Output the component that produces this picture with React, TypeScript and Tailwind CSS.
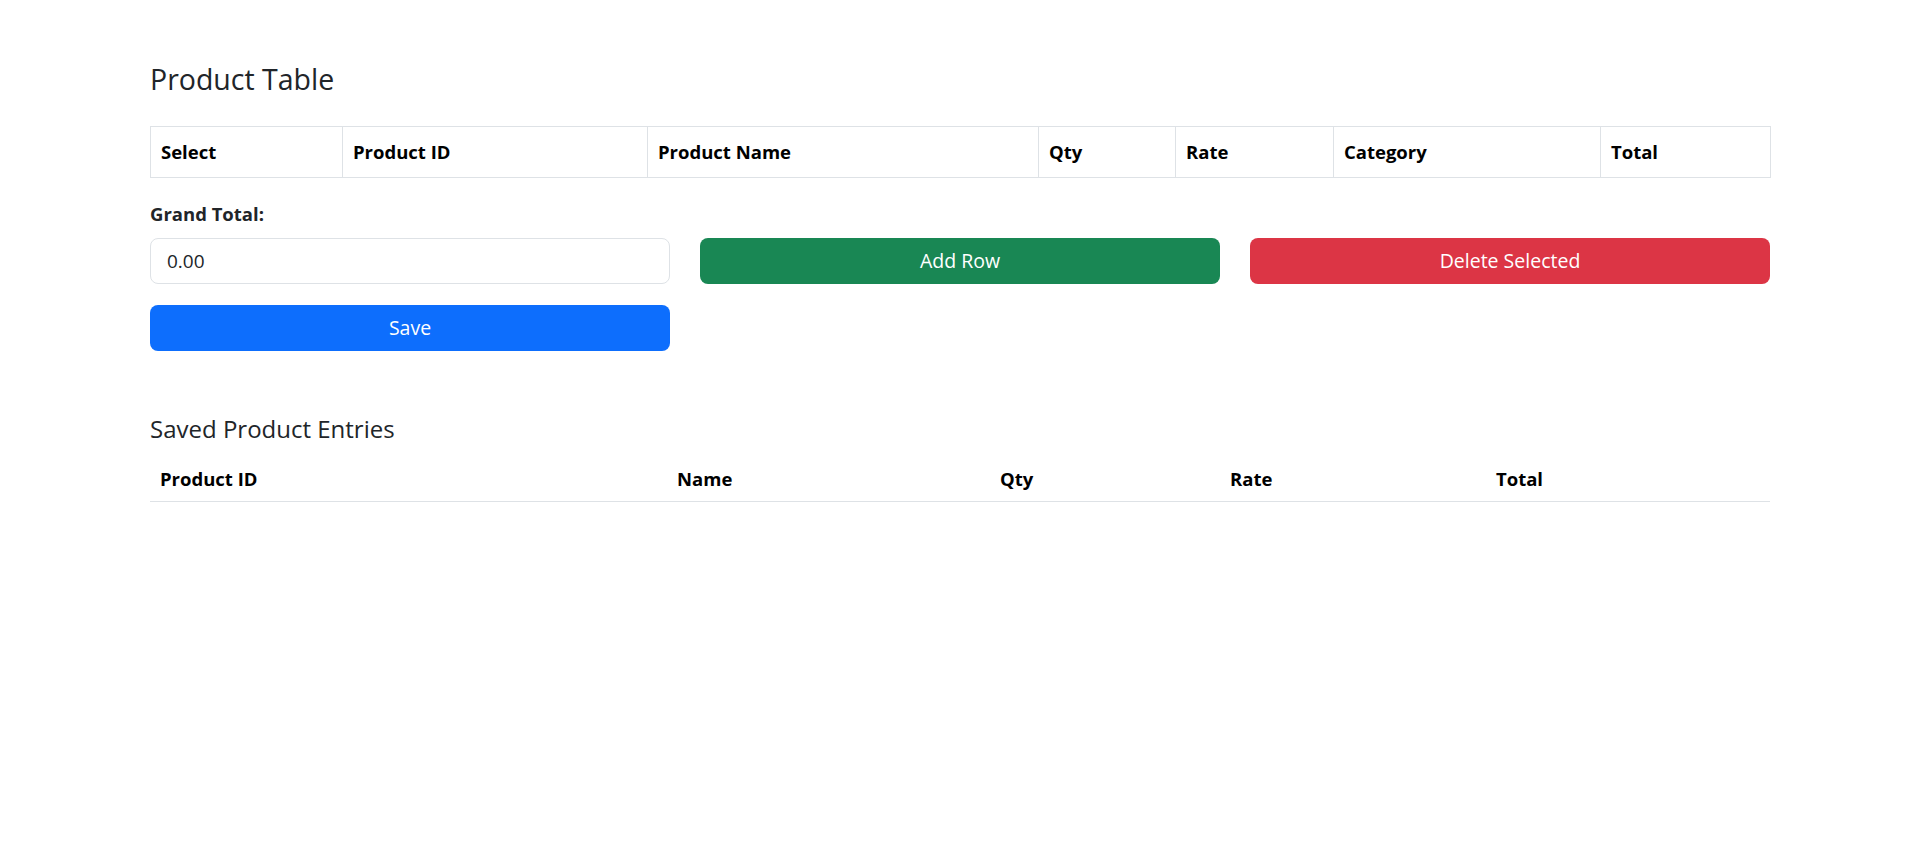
import React from "react";

export default function App() {
  return (
    <div className="min-h-[847px] bg-white text-[#212529] font-['Open_Sans',sans-serif]">
      <div className="px-[150px] pt-[61px]">
        <h3 className="text-[28.5px] leading-[36px] font-medium text-[#212529]">Product Table</h3>
        <table className="mt-[29px] w-full table-fixed border-collapse border border-[#dee2e6]">
          <colgroup>
            <col className="w-[192px]" />
            <col className="w-[305px]" />
            <col className="w-[391px]" />
            <col className="w-[137px]" />
            <col className="w-[158px]" />
            <col className="w-[267px]" />
            <col className="w-[170px]" />
          </colgroup>
          <thead>
            <tr>
              {["Select", "Product ID", "Product Name", "Qty", "Rate", "Category", "Total"].map((h) => (
                <th
                  key={h}
                  className="border border-[#dee2e6] px-[10px] py-[12px] text-left text-[18.5px] leading-[26px] font-bold text-black"
                >
                  {h}
                </th>
              ))}
            </tr>
          </thead>
          <tbody></tbody>
        </table>

        <div className="mt-[23px]">
          <label className="block text-[18.5px] leading-[26px] font-bold text-[#212529]">Grand Total:</label>
          <div className="mt-[11px] grid grid-cols-3 gap-x-[30px] gap-y-[21px]">
            <input
              readOnly
              value="0.00"
              className="h-[46px] w-full rounded-[8px] border border-[#dee2e6] px-[16px] text-[19px] text-[#212529] outline-none"
            />
            <button className="h-[46px] w-full rounded-[8px] bg-[#198754] text-[19.5px] text-white">Add Row</button>
            <button className="h-[46px] w-full rounded-[8px] bg-[#dc3545] text-[19.5px] text-white">Delete Selected</button>
            <button className="h-[46px] w-full rounded-[8px] bg-[#0d6efd] text-[19.5px] text-white">Save</button>
          </div>
        </div>

        <h4 className="mt-[64px] text-[24px] leading-[28px] font-medium text-[#212529]">Saved Product Entries</h4>
        <table className="mt-[14px] w-full table-fixed border-collapse">
          <colgroup>
            <col className="w-[517px]" />
            <col className="w-[323px]" />
            <col className="w-[230px]" />
            <col className="w-[266px]" />
            <col />
          </colgroup>
          <thead>
            <tr className="border-b border-[#dee2e6]">
              {["Product ID", "Name", "Qty", "Rate", "Total"].map((h) => (
                <th key={h} className="px-[10px] py-[9px] text-left text-[18.5px] leading-[26px] font-bold text-black">
                  {h}
                </th>
              ))}
            </tr>
          </thead>
          <tbody></tbody>
        </table>
      </div>
    </div>
  );
}
